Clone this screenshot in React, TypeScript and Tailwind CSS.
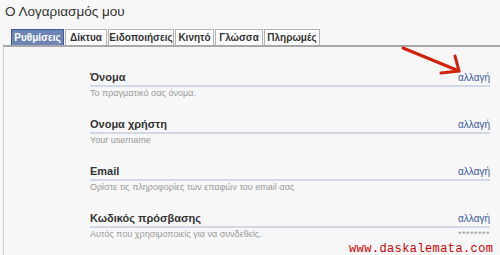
const tabs = [
  { label: "Ρυθμίσεις", w: "w-[53px]", active: true },
  { label: "Δίκτυα", w: "w-[42px]" },
  { label: "Ειδοποιήσεις", w: "w-[66px]" },
  { label: "Κινητό", w: "w-[39px]" },
  { label: "Γλώσσα", w: "w-[48px]" },
  { label: "Πληρωμές", w: "w-[56px]" },
]

const rows = [
  { title: "Όνομα", desc: "Το πραγματικό σας όνομα." },
  { title: "Ονομα χρήστη", desc: "Your username" },
  { title: "Email", desc: "Ορίστε τις πληροφορίες των επαφών του email σας" },
  { title: "Κωδικός πρόσβασης", desc: "Αυτός που χρησιμοποιείς για να συνδεθείς.", extra: "********" },
]

export default function App() {
  return (
    <div className="relative w-[500px] h-[255px] overflow-hidden bg-[#f7f7f7] font-['Liberation_Sans',Arial,sans-serif]">
      {/* Header */}
      <div className="h-[29px] pl-[5px] pt-[3px] text-[13.5px] leading-[18px] text-[#333]">
        Ο Λογαριασμός μου
      </div>

      {/* Tabs */}
      <div className="ml-[3px] pl-[8px] flex gap-[1px] border-b-2 border-[#a8a8a8]">
        {tabs.map((t) => (
          <div
            key={t.label}
            className={
              t.active
                ? `${t.w} h-[16px] flex items-center justify-center bg-[#6d84b4] border border-[#3b5998] border-b-0 text-white text-[10px] font-bold`
                : `${t.w} h-[16px] flex items-center justify-center bg-white border border-[#b4b4b4] border-b-0 text-[#333] text-[10px] font-bold`
            }
          >
            {t.label}
          </div>
        ))}
      </div>

      {/* Panel */}
      <div className="ml-[3px] h-full border-l border-[#d0d0d0] pt-[24px] pl-[86px] pr-[10px]">
        {rows.map((r) => (
          <div key={r.title} className="mb-[17px]">
            <div className="h-[16px] flex items-end justify-between border-b-2 border-[#d1d8e6] pb-[1px]">
              <span className="text-[11px] leading-[13px] font-bold text-[#333]">{r.title}</span>
              <span className="text-[10px] leading-[13px] text-[#3b5998]">αλλαγή</span>
            </div>
            <div className="h-[14px] flex items-center justify-between text-[9px] text-[#999]">
              <span>{r.desc}</span>
              {r.extra && <span className="tracking-[0.5px]">{r.extra}</span>}
            </div>
          </div>
        ))}
      </div>

      {/* Red arrow */}
      <svg className="absolute left-0 top-0 pointer-events-none" width="500" height="255">
        <g stroke="#d1220c" strokeWidth="3" fill="none" strokeLinecap="round" strokeLinejoin="round">
          <line x1="403" y1="48" x2="459" y2="71" />
          <polyline points="441,73 459,71 455,56" />
        </g>
      </svg>

      {/* Watermark */}
      <div className="absolute left-[349px] top-[243px] text-[12px] leading-[12px] tracking-[0.4px] text-[#cc0000] font-['Liberation_Mono',monospace]">
        www.daskalemata.com
      </div>
    </div>
  )
}
